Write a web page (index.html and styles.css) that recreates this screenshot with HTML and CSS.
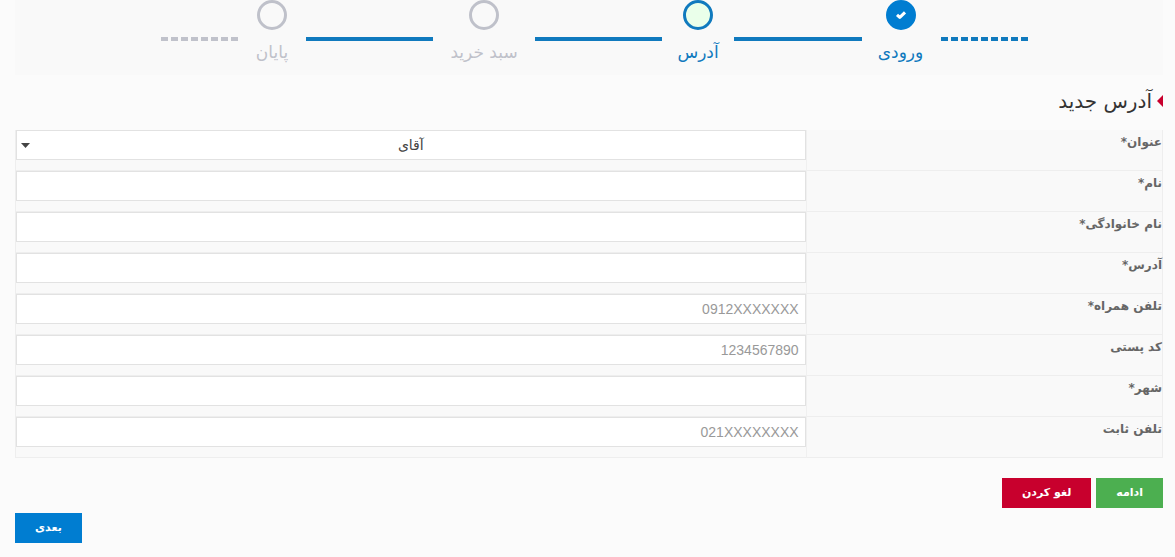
FILE: index.html
```
<!DOCTYPE html>
<html lang="fa" dir="rtl">
<head>
<meta charset="utf-8">
<meta name="viewport" content="width=device-width, initial-scale=1">
<title>آدرس جدید</title>
<link rel="stylesheet" href="styles.css">
</head>
<body>
<main class="page">
  <div class="steps">
    <span class="line line-dashed"></span>
    <div class="step step-done">
      <span class="dot"><svg viewBox="0 0 12 10" width="12" height="10"><path d="M2 4.8 L4.8 7.4 L10 2.4" fill="none" stroke="#fff" stroke-width="3" stroke-linejoin="round"/></svg></span>
      <span class="step-label">ورودی</span>
    </div>
    <span class="line"></span>
    <div class="step step-current">
      <span class="dot"></span>
      <span class="step-label">آدرس</span>
    </div>
    <span class="line"></span>
    <div class="step">
      <span class="dot"></span>
      <span class="step-label">سبد خرید</span>
    </div>
    <span class="line"></span>
    <div class="step">
      <span class="dot"></span>
      <span class="step-label">پایان</span>
    </div>
    <span class="line line-dashed line-muted"></span>
  </div>

  <h1 class="title"><svg class="title-mark" viewBox="0 0 6 12" width="6" height="12"><path d="M6 0 V12 L0 6 Z" fill="#c8002d"/></svg>آدرس جدید</h1>

  <form>
    <table class="fields">
      <tr>
        <th><label for="honorific">عنوان*</label></th>
        <td>
          <div class="select-wrap">
            <select class="control select" id="honorific"><option>آقای</option></select>
            <svg class="caret" viewBox="0 0 9 5" width="9" height="5"><path d="M0 0 H9 L4.5 5 Z" fill="#444"/></svg>
          </div>
        </td>
      </tr>
      <tr><th><label for="first">نام*</label></th><td><input class="control" id="first" type="text"></td></tr>
      <tr><th><label for="last">نام خانوادگی*</label></th><td><input class="control" id="last" type="text"></td></tr>
      <tr><th><label for="address">آدرس*</label></th><td><input class="control" id="address" type="text"></td></tr>
      <tr><th><label for="mobile">تلفن همراه*</label></th><td><input class="control" id="mobile" type="text" placeholder="0912XXXXXXX"></td></tr>
      <tr><th><label for="postal">کد پستی</label></th><td><input class="control" id="postal" type="text" placeholder="1234567890"></td></tr>
      <tr><th><label for="city">شهر*</label></th><td><input class="control" id="city" type="text"></td></tr>
      <tr><th><label for="phone">تلفن ثابت</label></th><td><input class="control" id="phone" type="text" placeholder="021XXXXXXXX"></td></tr>
    </table>
    <div class="actions">
      <button class="btn btn-continue" type="submit">ادامه</button>
      <button class="btn btn-cancel" type="button">لغو کردن</button>
    </div>
    <div class="next-row">
      <button class="btn btn-next" type="button">بعدی</button>
    </div>
  </form>
</main>
</body>
</html>
```
FILE: styles.css
```
* {
  box-sizing: border-box;
}

body {
  margin: 0;
  background: #fbfbfb;
  color: #333;
  font-family: "DejaVu Sans", sans-serif;
  font-size: 13px;
}

.page {
  padding: 0 12px 14px 15px;
}

.steps {
  display: grid;
  grid-template-columns: 89fr 77fr 128fr 72fr 127fr 102fr 127fr 68fr 80fr;
  height: 75px;
  padding: 0 135px 0 143px;
  background: #f9f9f9;
}

.line {
  height: 4px;
  margin-top: 37px;
  background: #107abe;
}

.line-dashed {
  background: repeating-linear-gradient(to left, #107abe 0 7px, transparent 7px 10px);
}

.line-muted {
  background: repeating-linear-gradient(to left, #c0c2cb 0 7px, transparent 7px 10px);
}

.step {
  display: flex;
  flex-direction: column;
  align-items: center;
  color: #bfc1ca;
}

.step-done,
.step-current {
  color: #107abe;
}

.dot {
  display: flex;
  align-items: center;
  justify-content: center;
  width: 30px;
  height: 30px;
  border: 3px solid currentColor;
  border-radius: 50%;
}

.step-done .dot {
  border-color: #007dd1;
  background: #007dd1;
}

.step-current .dot {
  background: #eaffea;
}

.step-label {
  margin-top: 10px;
  font-size: 17px;
  line-height: 24px;
  white-space: nowrap;
}

.title {
  display: flex;
  align-items: center;
  gap: 5px;
  margin: 11px 0 14px;
  font-size: 20px;
  font-weight: 400;
  line-height: 30px;
}

.fields {
  width: 100%;
  table-layout: fixed;
  border-collapse: separate;
  border-spacing: 0;
  border: 1px solid #eee;
  border-width: 0 1px;
  background: #f9f9f9;
}

.fields th,
.fields td {
  padding: 0;
  border-bottom: 1px solid #eee;
  vertical-align: top;
}

.fields th {
  width: 31.1%;
  border-left: 1px solid #f0f0f0;
  color: #666;
  font-size: 12px;
  line-height: 24px;
  text-align: right;
}

.fields td {
  padding-bottom: 10px;
}

.control {
  display: block;
  width: 100%;
  height: 30px;
  padding: 0 6px;
  border: 1px solid #e2e2e2;
  border-radius: 0;
  background: #fff;
  color: #444;
  font-family: "Liberation Sans", sans-serif;
  font-size: 14px;
}

.control::placeholder {
  color: #999;
  opacity: 1;
}

.select-wrap {
  position: relative;
}

.select {
  appearance: none;
  font-family: "DejaVu Sans", sans-serif;
  font-size: 14px;
  text-align: center;
  text-align-last: center;
}

.caret {
  position: absolute;
  left: 5px;
  top: 13px;
  pointer-events: none;
}

.actions {
  display: flex;
  gap: 5px;
  margin-top: 20px;
}

.next-row {
  display: flex;
  justify-content: flex-end;
  margin-top: 5px;
}

.btn {
  height: 30px;
  padding: 0 20px 2px;
  border: 0;
  color: #fff;
  font-family: "DejaVu Sans", sans-serif;
  font-size: 11px;
  font-weight: 700;
}

.btn-continue {
  background: #4caf50;
}

.btn-cancel {
  background: #c8002d;
}

.btn-next {
  background: #007dd1;
}
```
